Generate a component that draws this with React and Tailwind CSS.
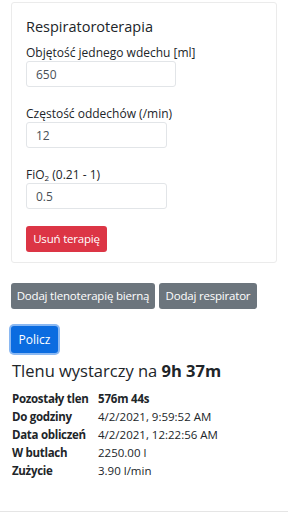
import React from 'react';

const font = { fontFamily: '"Open Sans", "Noto Sans", sans-serif' };

const Field = ({ label, value, width }) => (
    <div className="flex flex-col">
        <label className="text-[12px] leading-[15px] text-[#212529] whitespace-nowrap">{label}</label>
        <input
            readOnly
            value={value}
            className={`${width} h-[26px] mt-[1px] px-[9px] text-[12px] text-[#495057] bg-white border border-[#e2e5e8] rounded-[3px] outline-none`}
        />
    </div>
);

const rows = [
    ['Pozostały tlen', '576m 44s', true],
    ['Do godziny', '4/2/2021, 9:59:52 AM'],
    ['Data obliczeń', '4/2/2021, 12:22:56 AM'],
    ['W butlach', '2250.00 l'],
    ['Zużycie', '3.90 l/min'],
];

export default function App() {
    return (
        <div className="h-[512px] flex flex-col bg-white text-[#212529]" style={font}>
            <div className="px-[11px] pt-[2px]">
                <div className="border border-[#ebebeb] rounded-[3px] px-[14px] pt-[15px] pb-[14px] h-[261px]">
                    <h5 className="text-[14.5px] leading-[18px] font-medium mb-[9px]">Respiratoroterapia</h5>
                    <div className="flex flex-col gap-[19px]">
                        <Field label="Objętość jednego wdechu [ml]" value="650" width="w-[150px]" />
                        <Field label="Częstość oddechów (/min)" value="12" width="w-[141px]" />
                        <Field label={<>FiO<sub className="text-[8px]">2</sub> (0.21 - 1)</>} value="0.5" width="w-[141px]" />
                    </div>
                    <button className="mt-[17px] h-[26px] w-[81px] rounded-[3px] bg-[#dc3545] text-white text-[11.5px] tracking-[-0.2px] whitespace-nowrap">
                        Usuń terapię
                    </button>
                </div>

                <div className="flex gap-[4px] mt-[20px]">
                    <button className="h-[26px] w-[144px] rounded-[3px] bg-[#6c757d] text-white text-[11.5px] tracking-[-0.2px] whitespace-nowrap">
                        Dodaj tlenoterapię bierną
                    </button>
                    <button className="h-[26px] w-[98px] rounded-[3px] bg-[#6c757d] text-white text-[11.5px] tracking-[-0.2px] whitespace-nowrap">
                        Dodaj respirator
                    </button>
                </div>

                <button className="mt-[17px] h-[27px] w-[47px] rounded-[3px] bg-[#0b6ce0] text-white text-[12px] ring-2 ring-[#8ab8f2]">
                    Policz
                </button>

                <h4 className="mt-[6px] ml-[1px] text-[16.5px] leading-[24px] whitespace-nowrap">
                    Tlenu wystarczy na <span className="font-bold">9h 37m</span>
                </h4>

                <div className="mt-[7px] ml-[1px] flex flex-col">
                    {rows.map(([k, v, bold]) => (
                        <div key={k} className="flex h-[18px] items-center text-[11.5px] whitespace-nowrap">
                            <span className="w-[86px] shrink-0 font-bold tracking-[-0.3px]">{k}</span>
                            <span className={bold ? 'font-bold tracking-[-0.2px]' : ''}>{v}</span>
                        </div>
                    ))}
                </div>
            </div>
            <div className="mt-auto border-t border-[#e5e5e5]" />
        </div>
    );
}
